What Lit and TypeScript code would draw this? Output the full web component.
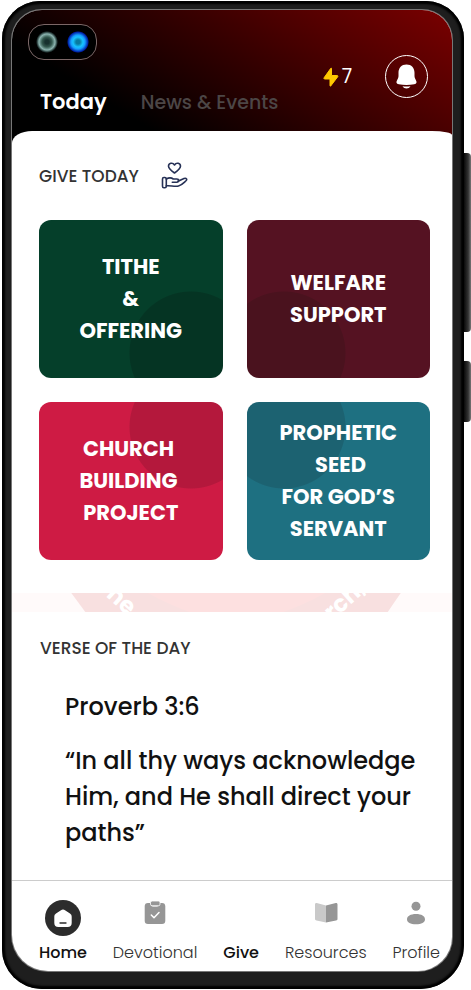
import { LitElement, html, svg, css } from "lit";
import { customElement } from "lit/decorators.js";

interface GiveCard {
  tone: string;
  lines: string[];
}

const cards: GiveCard[] = [
  { tone: "green", lines: ["TITHE", "&", "OFFERING"] },
  { tone: "maroon", lines: ["WELFARE", "SUPPORT"] },
  { tone: "red", lines: ["CHURCH\u00a0", "BUILDING\u00a0", "PROJECT"] },
  { tone: "teal", lines: ["PROPHETIC", "\u00a0SEED", "FOR GOD’S", "SERVANT"] },
];

const navIcons = {
  home: svg`<circle cx="18" cy="18" r="18" fill="#2c2c2c"/>
    <path d="M18 9.500c.8 0 1.400.3 2 .7l5 3.400c1.100.8 1.700 1.800 1.700 3.100v6.300c0 2.600-1.500 4-4 4h-9.400c-2.500 0-4-1.400-4-4v-6.300c0-1.300.6-2.300 1.700-3.100l5-3.400c.6-.4 1.200-.7 2-.7z" fill="#fff"/>
    <path d="M15 23h6" stroke="#2c2c2c" stroke-width="1.300" stroke-linecap="round"/>`,
  devotional: svg`<path d="M11 3h3v1.500c0 1.200.8 2 2 2h4c1.200 0 2-.8 2-2V3h3c2.200 0 3.300 1.200 3.300 3.300v14.400c0 2.200-1.100 3.300-3.300 3.300H11c-2.200 0-3.300-1.100-3.300-3.300V6.300C7.700 4.200 8.800 3 11 3z" fill="#969696"/>
    <rect x="13.500" y="1" width="9.500" height="4.800" rx="1.600" fill="#969696" stroke="#fff" stroke-width=".8"/>
    <path d="M14.300 15l2.700 2.700 5-5.200" fill="none" stroke="#fff" stroke-width="1.500" stroke-linecap="round" stroke-linejoin="round"/>`,
  resources: svg`<path d="M7 4.500c0-1 .7-1.600 1.700-1.400L18 5.500v17L8.500 20.500C7.600 20.300 7 19.800 7 19z" fill="#c9c9c9"/>
    <path d="M29.500 4.500c0-1-.7-1.600-1.700-1.400L18 5.500v17l10-2c1-.2 1.500-.7 1.500-1.500z" fill="#969696"/>`,
  profile: svg`<circle cx="18" cy="6.200" r="4.500" fill="#969696"/>
    <path d="M18 14c5.500 0 9 2.100 9 5.300 0 3.300-3.500 5-9 5s-9-1.700-9-5c0-3.200 3.500-5.300 9-5.300z" fill="#969696"/>`,
  none: svg``,
};

const navItems: { label: string; icon: keyof typeof navIcons; weight: string }[] = [
  { label: "Home", icon: "home", weight: "strong" },
  { label: "Devotional", icon: "devotional", weight: "" },
  { label: "Give", icon: "none", weight: "strong" },
  { label: "Resources", icon: "resources", weight: "" },
  { label: "Profile", icon: "profile", weight: "" },
];

@customElement("app-root")
export class AppRoot extends LitElement {
  static styles = css`
    :host {
      display: flex;
      box-sizing: border-box;
      min-height: 100vh;
      padding: 1px 0 1px 2px;
      background: #fff;
      color: #111;
      font-family: Poppins, Inter, "Open Sans", sans-serif;
    }
    * { box-sizing: border-box; }
    h1, h2, h3, p { margin: 0; }
    button { border: 0; background: none; padding: 0; font: inherit; color: inherit; }
    a { color: inherit; text-decoration: none; }
    .phone {
      flex: 1;
      min-width: 0;
      display: flex;
      padding: 9px 12px 18px 10px;
      border-radius: 38px 38px 44px 40px;
      background: #1e1e1e;
      box-shadow: inset 0 0 2px 3px #000;
    }
    .screen {
      flex: 1;
      min-width: 0;
      display: flex;
      flex-direction: column;
      overflow: hidden;
      border-radius: 30px 30px 34px 36px;
      background: #fff;
      box-shadow: 0 0 0 1px #777;
    }
    .rail { width: 7px; flex: none; padding-top: 152px; display: flex; flex-direction: column; gap: 29px; }
    .key { background: linear-gradient(to right, #0a0a0a, #333 60%, #777); border-radius: 0 4px 4px 0; }
    .volume { height: 179px; }
    .power { height: 61px; }

    header {
      display: flex;
      justify-content: space-between;
      padding: 14px 24px 32px 16px;
      background: linear-gradient(32deg, #000 26%, #7a0000);
      color: #fff;
    }
    .camera {
      width: 69px;
      height: 36px;
      display: flex;
      align-items: center;
      justify-content: space-between;
      padding: 0 7px;
      border: 1px solid #7b6767;
      border-radius: 16px;
      background: #000;
    }
    .lens { width: 22px; height: 22px; border-radius: 50%; background: radial-gradient(circle, #17302e 2px, #34594f 5px, #8cb4b0 8px, #243837 10px, #000 11px); }
    .lens.blue { background: radial-gradient(circle, #087ba0 2px, #17c4ff 5px, #159fff 7px, #001fa8 10px, #000 11px); }
    .tabs { display: flex; align-items: baseline; gap: 34px; padding: 26px 0 0 12px; }
    .tab { font-size: 19px; line-height: 32px; font-weight: 500; color: #4c4646; white-space: nowrap; }
    .tab.active { font-size: 21px; font-weight: 600; color: #fff; }
    .status { display: flex; align-items: center; gap: 33px; height: 43px; margin-top: 31px; }
    .streak { display: flex; align-items: center; gap: 3px; font-size: 19px; line-height: 24px; }
    .bell { width: 43px; height: 43px; display: block; }
    .bell svg { display: block; }

    .sheet { margin-top: -20px; border-radius: 20px 20px 0 0 / 12px 4px 0 0; background: #fff; padding: 31px 22px 33px 27px; }
    .title { font-size: 17px; line-height: 24px; font-weight: 500; color: #333; }
    .heading { display: flex; align-items: center; gap: 22px; height: 27px; margin-bottom: 31px; }
    .grid { display: grid; grid-template-columns: 1fr 1fr; grid-auto-rows: minmax(158px, auto); gap: 24px; }
    .card {
      border-radius: 12px;
      color: #fff;
      font-size: 21px;
      line-height: 32px;
      font-weight: 700;
      text-align: center;
    }
    .line { display: block; }
    .green { background: radial-gradient(circle at calc(100% - 32px) calc(100% - 25px), #053423 61px, #053f2a 62px); }
    .maroon { background: radial-gradient(circle at 37px calc(100% - 25px), #4a121e 61px, #551222 62px); }
    .red { background: radial-gradient(circle at calc(100% - 32px) 25px, #b4183c 61px, #ce1b44 62px); }
    .teal { background: radial-gradient(circle at 37px 25px, #1c6271 61px, #1e7081 62px); }

    .banner { display: block; flex: none; width: 100%; height: 19px; background: #fffafa; }
    .banner text { font-size: 23px; font-weight: 700; fill: #fff; }
    .verse { flex: 1; padding: 24px 24px 27px 28px; }
    .quote { padding: 29px 0 0 25px; font-size: 24px; line-height: 36px; font-weight: 500; }
    .ref { font: inherit; margin-bottom: 18px; }

    nav { display: flex; justify-content: space-between; height: 91px; padding: 19px 12px 0 27px; border-top: 1px solid #ccc; }
    .item { display: flex; flex-direction: column; align-items: center; gap: 5px; font-size: 16px; line-height: 24px; font-weight: 300; color: #333; }
    .item.strong { font-weight: 500; color: #111; }
    .item svg { display: block; }
  `;

  render() {
    return html`
      <div class="phone">
        <div class="screen">
          <header>
            <div>
              <div class="camera"><span class="lens"></span><span class="lens blue"></span></div>
              <div class="tabs">
                <button class="tab active">Today</button>
                <button class="tab">News &amp; Events</button>
              </div>
            </div>
            <div class="status">
              <span class="streak">
                <svg width="16" height="20" viewBox="0 0 16 20"><path d="M8.500 1.500v7h5.400c1 0 1.300.6.700 1.400L7.700 19c-.3.400-.7.200-.7-.3V12H1.800c-.9 0-1.200-.6-.6-1.400L7.800 1.300c.3-.4.7-.3.7.2z" fill="#ffc800" stroke="#ffc800"/></svg>
                7
              </span>
              <button class="bell" aria-label="Notifications">
                <svg width="43" height="43" viewBox="0 0 43 43">
                  <circle cx="21.500" cy="21.500" r="21" fill="none" stroke="#fff" stroke-width="1"/>
                  <path d="M21.500 9.500c-5 0-8 3.500-8 8.300v3.500c0 1.200-.5 2.200-1.200 3.400-1.500 2.600-1.100 3.900 1.500 4.500 5 1.100 10.400 1.100 15.400 0 2.600-.6 3-1.900 1.500-4.500-.7-1.200-1.200-2.200-1.200-3.400v-3.500c0-4.800-3-8.300-8-8.300z" fill="#fff"/>
                  <path d="M17.500 31.300c2.600.3 5.400.3 8 0-1 1.500-2.400 2.200-4 2.200s-3-.7-4-2.200z" fill="#fff"/>
                </svg>
              </button>
            </div>
          </header>

          <section class="sheet">
            <div class="heading">
              <h2 class="title">GIVE TODAY</h2>
              <svg width="27" height="27" viewBox="0 0 27 27" fill="none" stroke="#263156" stroke-width="1.600" stroke-linecap="round" stroke-linejoin="round">
                <path d="M13.500 11C10 8.400 7.500 6.500 7.500 4.200c0-3.300 4.200-4 6-1.200 1.800-2.800 6-2.100 6 1.200 0 2.300-2.500 4.200-6 6.800z"/>
                <rect x="1.500" y="15.500" width="3.800" height="10.200" rx="1.400"/>
                <path d="M5.300 17c2.700-1.600 5-1.500 7 0h3.500c2.500 0 2.500 3.200 0 3.200h-4.500"/>
                <path d="M17 19.200l6-2.700c2.500-.9 3.500 1 1.800 2.500-2.600 2.400-4.300 4.300-7.300 5-4.200 1-8-.8-12.200-.2"/>
              </svg>
            </div>
            <div class="grid">
              ${cards.map(
                (card) => html`<button class="card ${card.tone}">
                  ${card.lines.map((line) => html`<span class="line">${line}</span>`)}
                </button>`
              )}
            </div>
          </section>

          <svg class="banner" viewBox="0 0 438 19" preserveAspectRatio="xMidYMid slice">
            <path d="M59 0H387L374 19H73z" fill="#f8e0e0"/>
            <path d="M135 0H312Q290 12 270 19H177Q157 12 135 0z" fill="#fde0e0"/>
            <text transform="translate(93 3) rotate(42)">he</text>
            <text transform="translate(137 35) rotate(30)">l</text>
            <text transform="translate(319 28) rotate(-42)">rch,</text>
          </svg>

          <section class="verse">
            <h2 class="title">VERSE OF THE DAY</h2>
            <div class="quote">
              <h3 class="ref">Proverb 3:6</h3>
              <p>“In all thy ways acknowledge Him, and He shall direct your paths”</p>
            </div>
          </section>

          <nav>
            ${navItems.map(
              (item) => html`<a class="item ${item.weight}" href="#">
                <svg width="36" height="36" viewBox="0 0 36 36">${navIcons[item.icon]}</svg>
                ${item.label}
              </a>`
            )}
          </nav>
        </div>
      </div>
      <div class="rail">
        <div class="key volume"></div>
        <div class="key power"></div>
      </div>
    `;
  }
}
